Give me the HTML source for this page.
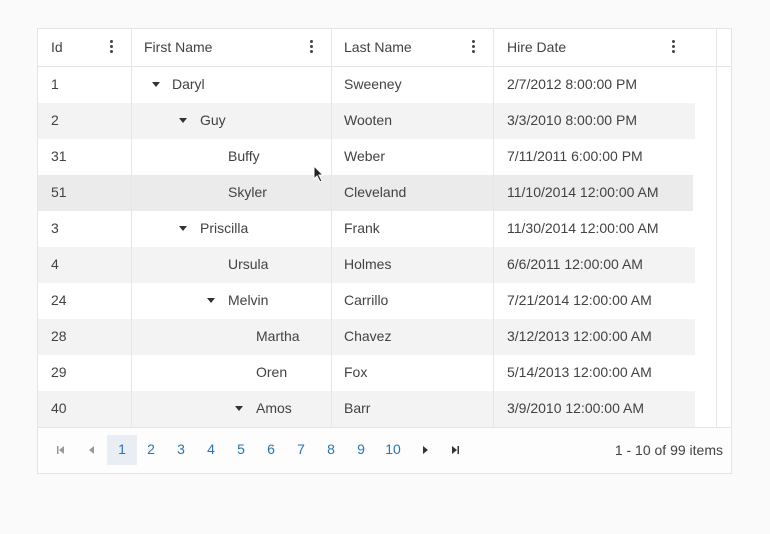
<!DOCTYPE html>
<html><head><style>
body{margin:0;width:770px;height:534px;background:#fafafa;font-family:"Liberation Sans",sans-serif;font-size:14px;color:#424242;position:relative;overflow:hidden}
.g{position:absolute;left:37px;top:28px;width:693px;height:444px;border:1px solid #e4e4e4;background:#fff;overflow:hidden}
.hd{position:absolute;left:0;top:0;width:693px;height:37px;border-bottom:1px solid #e4e4e4}
.vl{position:absolute;top:0;width:1px;height:398px;background:#e6e6e6}
.row{position:absolute;left:0;height:36px;line-height:34px;width:657px}
.alt{background:#f3f3f3}
.hov{background:#ebebeb}
.t{position:absolute;white-space:nowrap}
.dots{position:absolute;top:11px;width:3px}
.dots i{display:block;width:3px;height:3px;border-radius:50%;background:#444;margin-bottom:2px}
.arr{position:absolute;width:0;height:0;border-left:4px solid transparent;border-right:4px solid transparent;border-top:5px solid #333;top:15px}
.pg{position:absolute;left:0;top:398px;width:693px;height:45px;border-top:1px solid #e4e4e4;background:#fdfdfd}
.pn{position:absolute;height:30px;line-height:29px;width:30px;text-align:center;color:#2b73b8}
</style></head><body>
<div class="g">
<div class="hd">
<span class="t" style="left:13px;top:10px">Id</span><div class="dots" style="left:72px"><i></i><i></i><i></i></div>
<span class="t" style="left:106px;top:10px">First Name</span><div class="dots" style="left:272px"><i></i><i></i><i></i></div>
<span class="t" style="left:306px;top:10px">Last Name</span><div class="dots" style="left:434px"><i></i><i></i><i></i></div>
<span class="t" style="left:469px;top:10px">Hire Date</span><div class="dots" style="left:634px"><i></i><i></i><i></i></div>
</div>
<div style="position:absolute;left:0;top:38px;width:693px;height:360px">
<div class="row" style="top:0"><span class="t" style="left:13px">1</span><div class="arr" style="left:114px"></div><span class="t" style="left:134px">Daryl</span><span class="t" style="left:306px">Sweeney</span><span class="t" style="left:469px">2/7/2012 8:00:00 PM</span></div>
<div class="row alt" style="top:36px"><span class="t" style="left:13px">2</span><div class="arr" style="left:141px"></div><span class="t" style="left:162px">Guy</span><span class="t" style="left:306px">Wooten</span><span class="t" style="left:469px">3/3/2010 8:00:00 PM</span></div>
<div class="row" style="top:72px"><span class="t" style="left:13px">31</span><span class="t" style="left:190px">Buffy</span><span class="t" style="left:306px">Weber</span><span class="t" style="left:469px">7/11/2011 6:00:00 PM</span></div>
<div class="row hov" style="top:108px;width:655px"><span class="t" style="left:13px">51</span><span class="t" style="left:190px">Skyler</span><span class="t" style="left:306px">Cleveland</span><span class="t" style="left:469px">11/10/2014 12:00:00 AM</span></div>
<div class="row" style="top:144px"><span class="t" style="left:13px">3</span><div class="arr" style="left:141px"></div><span class="t" style="left:162px">Priscilla</span><span class="t" style="left:306px">Frank</span><span class="t" style="left:469px">11/30/2014 12:00:00 AM</span></div>
<div class="row alt" style="top:180px"><span class="t" style="left:13px">4</span><span class="t" style="left:190px">Ursula</span><span class="t" style="left:306px">Holmes</span><span class="t" style="left:469px">6/6/2011 12:00:00 AM</span></div>
<div class="row" style="top:216px"><span class="t" style="left:13px">24</span><div class="arr" style="left:169px"></div><span class="t" style="left:190px">Melvin</span><span class="t" style="left:306px">Carrillo</span><span class="t" style="left:469px">7/21/2014 12:00:00 AM</span></div>
<div class="row alt" style="top:252px"><span class="t" style="left:13px">28</span><span class="t" style="left:218px">Martha</span><span class="t" style="left:306px">Chavez</span><span class="t" style="left:469px">3/12/2013 12:00:00 AM</span></div>
<div class="row" style="top:288px"><span class="t" style="left:13px">29</span><span class="t" style="left:218px">Oren</span><span class="t" style="left:306px">Fox</span><span class="t" style="left:469px">5/14/2013 12:00:00 AM</span></div>
<div class="row alt" style="top:324px"><span class="t" style="left:13px">40</span><div class="arr" style="left:197px"></div><span class="t" style="left:218px">Amos</span><span class="t" style="left:306px">Barr</span><span class="t" style="left:469px">3/9/2010 12:00:00 AM</span></div>
</div>
<div class="vl" style="left:93px"></div><div class="vl" style="left:293px"></div><div class="vl" style="left:455px"></div><div class="vl" style="left:678px"></div>
<div class="pg">
<svg style="position:absolute;left:18px;top:17px" width="10" height="10"><rect x="1" y="1" width="1.5" height="8" fill="#999"/><path d="M8 1 L3 5 L8 9Z" fill="#999"/></svg>
<svg style="position:absolute;left:49px;top:17px" width="10" height="10"><path d="M7 1 L2 5 L7 9Z" fill="#999"/></svg>
<div class="pn" style="left:69px;background:#e8eef3;top:7px">1</div>
<div class="pn" style="left:98px;top:7px">2</div><div class="pn" style="left:128px;top:7px">3</div><div class="pn" style="left:158px;top:7px">4</div><div class="pn" style="left:188px;top:7px">5</div><div class="pn" style="left:218px;top:7px">6</div><div class="pn" style="left:248px;top:7px">7</div><div class="pn" style="left:278px;top:7px">8</div><div class="pn" style="left:308px;top:7px">9</div><div class="pn" style="left:340px;top:7px">10</div>
<svg style="position:absolute;left:382px;top:17px" width="10" height="10"><path d="M3 1 L8 5 L3 9Z" fill="#333"/></svg>
<svg style="position:absolute;left:412px;top:17px" width="10" height="10"><path d="M2 1 L7 5 L2 9Z" fill="#333"/><rect x="7.5" y="1" width="1.5" height="8" fill="#333"/></svg>
<span class="t" style="right:8px;top:14px">1 - 10 of 99 items</span>
</div>
</div>
<svg style="position:absolute;left:313px;top:165px" width="12" height="18"><path d="M1 1 L1 14 L4 11 L7 17 L9 16 L6 10 L10 10Z" fill="#222" stroke="#fff" stroke-width="1"/></svg>
</body></html>
